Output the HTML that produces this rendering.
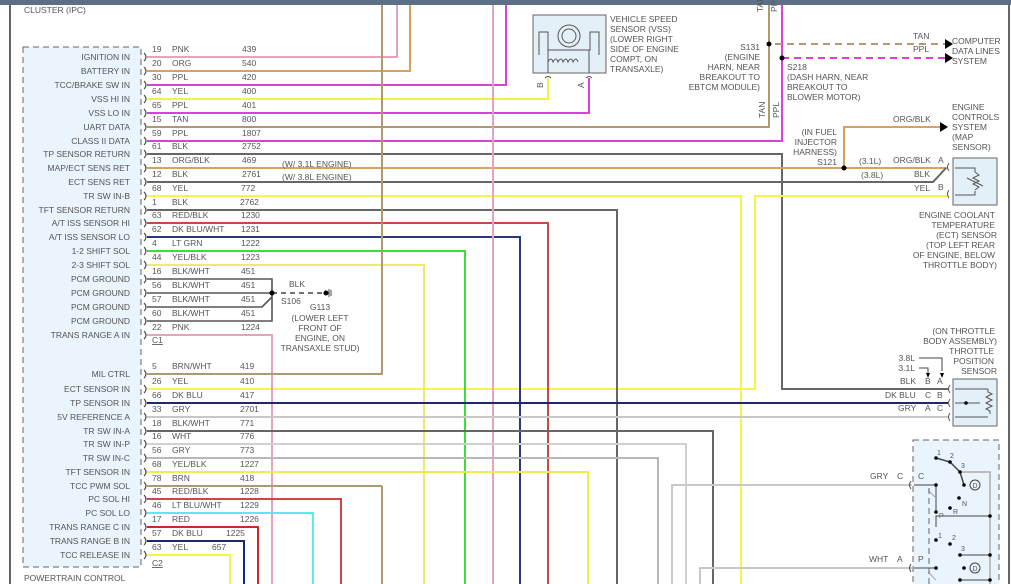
<!DOCTYPE html>
<html><head><meta charset="utf-8"><style>
html,body{margin:0;padding:0;background:#fff;}
svg{display:block;}
text{font-family:"Liberation Sans",sans-serif;font-size:8.5px;fill:#555;}
.r{text-anchor:end}
.m{text-anchor:middle}
</style></head><body>
<svg width="1011" height="584" viewBox="0 0 1011 584" xmlns="http://www.w3.org/2000/svg">
<rect x="0" y="0" width="1011" height="5" fill="#5b6f87"/>
<line x1="10" y1="5" x2="10" y2="584" stroke="#333" stroke-width="1.5"/>
<line x1="1009" y1="5" x2="1009" y2="584" stroke="#333" stroke-width="1.5"/>
<text x="24" y="13">CLUSTER (IPC)</text>
<text x="24" y="581">POWERTRAIN CONTROL</text>
<rect x="23" y="47" width="118" height="520" fill="#e9f4fc" stroke="#666" stroke-dasharray="6,4"/>

<g fill="none" stroke-width="2">
<path d="M147 57H397V5" stroke="#e6a3bb"/>
<path d="M147 71H410V5" stroke="#d9a060"/>
<path d="M147 85H506V5" stroke="#dd3fdd"/>
<path d="M147 99H548V78" stroke="#f2f24a"/>
<path d="M147 113H589V78" stroke="#dd3fdd"/>
<path d="M147 127H769V5" stroke="#b09870"/>
<path d="M147 141H782V5" stroke="#dd3fdd"/>
<path d="M147 154H782V389H948" stroke="#666"/>
<path d="M147 168H948" stroke="#d9a060"/>
<path d="M844 168V127H940" stroke="#d9a060"/>
<path d="M147 182H933L946 168" stroke="#666"/>
<path d="M147 196H741V584" stroke="#f5f54a"/>
<path d="M147 389H755V196H948" stroke="#f5f54a"/>
<path d="M147 210H617V584" stroke="#666"/>
<path d="M147 223H548V584" stroke="#c84848"/>
<path d="M147 237H520V584" stroke="#2a3a78"/>
<path d="M147 251H465V584" stroke="#3ddc3d"/>
<path d="M147 265H424V584" stroke="#f0ec6a"/>
<path d="M147 279H272V321H147M147 293H272M147 307H262L272 297" stroke="#555" stroke-width="1.6"/>
<path d="M147 335H272V584" stroke="#e6a3bb"/>
<path d="M493 5V584" stroke="#e6a3bb"/>
<path d="M147 374H382V5" stroke="#b09870"/>
<path d="M382 486V584" stroke="#b09870"/>
<path d="M147 403H948" stroke="#1a2a6a"/>
<path d="M147 417H948" stroke="#c8c8c8"/>
<path d="M147 431H713V584" stroke="#666"/>
<path d="M147 444H686V584" stroke="#d0d0d0"/>
<path d="M147 458H658V584" stroke="#b8b8b8"/>
<path d="M147 472H588V584" stroke="#f0ec4a"/>
<path d="M147 486H382" stroke="#b09870"/>
<path d="M147 499H341V584" stroke="#c84848"/>
<path d="M147 513H313V584" stroke="#5ee8ee"/>
<path d="M147 527H258V584" stroke="#cc2a2a"/>
<path d="M147 541H244V584" stroke="#1a2a6a"/>
<path d="M147 555H230V584" stroke="#f5f54a"/>
<path d="M672 584V485H912" stroke="#c8c8c8"/>
<path d="M700 584V568H912" stroke="#c8c8c8"/>
<path d="M775 44H945" stroke="#b09870" stroke-dasharray="7,5"/>
<path d="M782 58H945" stroke="#dd3fdd" stroke-dasharray="7,5"/>
</g>
<path d="M272 293H326" stroke="#444" stroke-width="1.5" stroke-dasharray="5,4"/>
<circle cx="272" cy="293" r="2.5" fill="#000"/><circle cx="326" cy="293" r="2.5" fill="#000"/>
<path d="M329 289V297M331 290V296" stroke="#444"/>
<text x="289" y="287">BLK</text><text x="281" y="304">S106</text>
<text x="320" y="310" class="m">G113</text>
<text x="320" y="321" class="m">(LOWER LEFT</text><text x="320" y="331" class="m">FRONT OF</text>
<text x="320" y="341" class="m">ENGINE, ON</text><text x="320" y="351" class="m">TRANSAXLE STUD)</text>
<text x="282" y="167">(W/ 3.1L ENGINE)</text><text x="282" y="180">(W/ 3.8L ENGINE)</text>

<g fill="none" stroke="#444" stroke-width="1.1">
<path d="M144 53q4 4 0 8M144 67q4 4 0 8M144 81q4 4 0 8M144 95q4 4 0 8M144 109q4 4 0 8M144 123q4 4 0 8M144 137q4 4 0 8M144 150q4 4 0 8M144 164q4 4 0 8M144 178q4 4 0 8M144 192q4 4 0 8M144 206q4 4 0 8M144 219q4 4 0 8M144 233q4 4 0 8M144 247q4 4 0 8M144 261q4 4 0 8M144 275q4 4 0 8M144 289q4 4 0 8M144 303q4 4 0 8M144 317q4 4 0 8M144 331q4 4 0 8M144 370q4 4 0 8M144 385q4 4 0 8M144 399q4 4 0 8M144 413q4 4 0 8M144 427q4 4 0 8M144 440q4 4 0 8M144 454q4 4 0 8M144 468q4 4 0 8M144 482q4 4 0 8M144 495q4 4 0 8M144 509q4 4 0 8M144 523q4 4 0 8M144 537q4 4 0 8M144 551q4 4 0 8"/>
</g>
<g>
<text class="r" x="130" y="60">IGNITION IN</text><text class="r" x="130" y="74">BATTERY IN</text><text class="r" x="130" y="88">TCC/BRAKE SW IN</text><text class="r" x="130" y="102">VSS HI IN</text><text class="r" x="130" y="116">VSS LO IN</text><text class="r" x="130" y="130">UART DATA</text><text class="r" x="130" y="144">CLASS II DATA</text><text class="r" x="130" y="157">TP SENSOR RETURN</text><text class="r" x="130" y="171">MAP/ECT SENS RET</text><text class="r" x="130" y="185">ECT SENS RET</text><text class="r" x="130" y="199">TR SW IN-B</text><text class="r" x="130" y="213">TFT SENSOR RETURN</text><text class="r" x="130" y="226">A/T ISS SENSOR HI</text><text class="r" x="130" y="240">A/T ISS SENSOR LO</text><text class="r" x="130" y="254">1-2 SHIFT SOL</text><text class="r" x="130" y="268">2-3 SHIFT SOL</text><text class="r" x="130" y="282">PCM GROUND</text><text class="r" x="130" y="296">PCM GROUND</text><text class="r" x="130" y="310">PCM GROUND</text><text class="r" x="130" y="324">PCM GROUND</text><text class="r" x="130" y="338">TRANS RANGE A IN</text>
<text class="r" x="130" y="377">MIL CTRL</text><text class="r" x="130" y="392">ECT SENSOR IN</text><text class="r" x="130" y="406">TP SENSOR IN</text><text class="r" x="130" y="420">5V REFERENCE A</text><text class="r" x="130" y="434">TR SW IN-A</text><text class="r" x="130" y="447">TR SW IN-P</text><text class="r" x="130" y="461">TR SW IN-C</text><text class="r" x="130" y="475">TFT SENSOR IN</text><text class="r" x="130" y="489">TCC PWM SOL</text><text class="r" x="130" y="502">PC SOL HI</text><text class="r" x="130" y="516">PC SOL LO</text><text class="r" x="130" y="530">TRANS RANGE C IN</text><text class="r" x="130" y="544">TRANS RANGE B IN</text><text class="r" x="130" y="558">TCC RELEASE IN</text>
</g>
<g>
<text x="152" y="52">19</text><text x="172" y="52">PNK</text><text x="242" y="52">439</text>
<text x="152" y="66">20</text><text x="172" y="66">ORG</text><text x="242" y="66">540</text>
<text x="152" y="80">30</text><text x="172" y="80">PPL</text><text x="242" y="80">420</text>
<text x="152" y="94">64</text><text x="172" y="94">YEL</text><text x="242" y="94">400</text>
<text x="152" y="108">65</text><text x="172" y="108">PPL</text><text x="242" y="108">401</text>
<text x="152" y="122">15</text><text x="172" y="122">TAN</text><text x="242" y="122">800</text>
<text x="152" y="136">59</text><text x="172" y="136">PPL</text><text x="242" y="136">1807</text>
<text x="152" y="149">61</text><text x="172" y="149">BLK</text><text x="242" y="149">2752</text>
<text x="152" y="163">13</text><text x="172" y="163">ORG/BLK</text><text x="242" y="163">469</text>
<text x="152" y="177">12</text><text x="172" y="177">BLK</text><text x="242" y="177">2761</text>
<text x="152" y="191">68</text><text x="172" y="191">YEL</text><text x="241" y="191">772</text>
<text x="152" y="205">1</text><text x="172" y="205">BLK</text><text x="240" y="205">2762</text>
<text x="152" y="218">63</text><text x="172" y="218">RED/BLK</text><text x="241" y="218">1230</text>
<text x="152" y="232">62</text><text x="172" y="232">DK BLU/WHT</text><text x="241" y="232">1231</text>
<text x="152" y="246">4</text><text x="172" y="246">LT GRN</text><text x="241" y="246">1222</text>
<text x="152" y="260">44</text><text x="172" y="260">YEL/BLK</text><text x="241" y="260">1223</text>
<text x="152" y="274">16</text><text x="172" y="274">BLK/WHT</text><text x="241" y="274">451</text>
<text x="152" y="288">56</text><text x="172" y="288">BLK/WHT</text><text x="241" y="288">451</text>
<text x="152" y="302">57</text><text x="172" y="302">BLK/WHT</text><text x="241" y="302">451</text>
<text x="152" y="316">60</text><text x="172" y="316">BLK/WHT</text><text x="241" y="316">451</text>
<text x="152" y="330">22</text><text x="172" y="330">PNK</text><text x="241" y="330">1224</text>
<text x="152" y="343" text-decoration="underline">C1</text>
<text x="152" y="369">5</text><text x="172" y="369">BRN/WHT</text><text x="240" y="369">419</text>
<text x="152" y="384">26</text><text x="172" y="384">YEL</text><text x="240" y="384">410</text>
<text x="152" y="398">66</text><text x="172" y="398">DK BLU</text><text x="240" y="398">417</text>
<text x="152" y="412">33</text><text x="172" y="412">GRY</text><text x="240" y="412">2701</text>
<text x="152" y="426">18</text><text x="172" y="426">BLK/WHT</text><text x="240" y="426">771</text>
<text x="152" y="439">16</text><text x="172" y="439">WHT</text><text x="240" y="439">776</text>
<text x="152" y="453">56</text><text x="172" y="453">GRY</text><text x="240" y="453">773</text>
<text x="152" y="467">68</text><text x="172" y="467">YEL/BLK</text><text x="240" y="467">1227</text>
<text x="152" y="481">78</text><text x="172" y="481">BRN</text><text x="240" y="481">418</text>
<text x="152" y="494">45</text><text x="172" y="494">RED/BLK</text><text x="240" y="494">1228</text>
<text x="152" y="508">46</text><text x="172" y="508">LT BLU/WHT</text><text x="240" y="508">1229</text>
<text x="152" y="522">17</text><text x="172" y="522">RED</text><text x="240" y="522">1226</text>
<text x="152" y="536">57</text><text x="172" y="536">DK BLU</text><text x="226" y="536">1225</text>
<text x="152" y="550">63</text><text x="172" y="550">YEL</text><text x="212" y="550">657</text>
<text x="152" y="566" text-decoration="underline">C2</text>
</g>

<rect x="533" y="15" width="73" height="58" fill="#e4f0f8" stroke="#666"/>
<g fill="none" stroke="#555" stroke-width="1">
<circle cx="569" cy="36" r="11"/><circle cx="569" cy="36" r="7"/>
<path d="M539 55V32H548V50H590V32H599V55"/>
<path d="M548 62q3-6 5 0q3-6 5 0q3-6 5 0q3-6 5 0q3-6 5 0q3-6 5 0"/>
<path d="M548 50V73M589 50V73"/>
<path d="M545 78q3-3 6 0M586 78q3-3 6 0"/>
</g>
<text x="610" y="22">VEHICLE SPEED</text><text x="610" y="32">SENSOR (VSS)</text><text x="610" y="42">(LOWER RIGHT</text><text x="610" y="52">SIDE OF ENGINE</text><text x="610" y="62">COMPT, ON</text><text x="610" y="72">TRANSAXLE)</text>
<text x="543" y="88" transform="rotate(-90 543 88)">B</text><text x="584" y="88" transform="rotate(-90 584 88)">A</text>

<circle cx="769" cy="44" r="2.5" fill="#000"/><circle cx="782" cy="58" r="2.5" fill="#000"/>
<path d="M945 39L953 44L945 49ZM945 53L953 58L945 63Z" fill="#000"/>
<text x="763" y="12" transform="rotate(-90 763 12)">TAN</text><text x="777" y="12" transform="rotate(-90 777 12)">PPL</text>
<text x="765" y="118" transform="rotate(-90 765 118)">TAN</text><text x="779" y="118" transform="rotate(-90 779 118)">PPL</text>
<text x="760" y="50" class="r">S131</text><text x="760" y="60" class="r">(ENGINE</text><text x="760" y="70" class="r">HARN, NEAR</text><text x="760" y="80" class="r">BREAKOUT TO</text><text x="760" y="90" class="r">EBTCM MODULE)</text>
<text x="787" y="70">S218</text><text x="787" y="80">(DASH HARN, NEAR</text><text x="787" y="90">BREAKOUT TO</text><text x="787" y="100">BLOWER MOTOR)</text>
<text x="913" y="39">TAN</text><text x="913" y="52">PPL</text>
<text x="952" y="44">COMPUTER</text><text x="952" y="54">DATA LINES</text><text x="952" y="64">SYSTEM</text>

<path d="M940 122L948 127L940 132Z" fill="#000"/>
<text x="893" y="122">ORG/BLK</text>
<text x="952" y="110">ENGINE</text><text x="952" y="120">CONTROLS</text><text x="952" y="130">SYSTEM</text><text x="952" y="140">(MAP</text><text x="952" y="150">SENSOR)</text>
<text x="837" y="135" class="r">(IN FUEL</text><text x="837" y="145" class="r">INJECTOR</text><text x="837" y="155" class="r">HARNESS)</text><text x="837" y="165" class="r">S121</text>
<circle cx="844" cy="168" r="2.5" fill="#000"/>
<text x="859" y="164">(3.1L)</text><text x="861" y="178">(3.8L)</text>
<text x="893" y="163">ORG/BLK</text><text x="914" y="177">BLK</text><text x="914" y="191">YEL</text>
<text x="938" y="163">A</text><text x="938" y="190">B</text>
<rect x="953" y="158" width="44" height="47" fill="#e4f0f8" stroke="#666"/>
<g fill="none" stroke="#555" stroke-width="1">
<path d="M949 163q-3 4 0 8M949 190q-3 4 0 8"/>
<path d="M955 168H975V172M955 195H975V191M975 172l4 3-6 3 6 3-6 3 6 3-4 3M967 178l16 8"/>
</g>
<text x="995" y="218" class="r">ENGINE COOLANT</text><text x="995" y="228" class="r">TEMPERATURE</text><text x="997" y="238" class="r">(ECT) SENSOR</text><text x="995" y="248" class="r">(TOP LEFT REAR</text><text x="995" y="258" class="r">OF ENGINE, BELOW</text><text x="997" y="268" class="r">THROTTLE BODY)</text>

<text x="995" y="334" class="r">(ON THROTTLE</text><text x="997" y="344" class="r">BODY ASSEMBLY)</text><text x="994" y="354" class="r">THROTTLE</text><text x="994" y="364" class="r">POSITION</text><text x="997" y="374" class="r">SENSOR</text>
<text x="915" y="361" class="r">3.8L</text><text x="915" y="371" class="r">3.1L</text>
<path d="M919 358H942V371M919 368H928V375" fill="none" stroke="#444"/>
<path d="M926 373L928 378L930 373ZM940 373L942 378L944 373Z" fill="#000"/>
<text x="900" y="384">BLK</text><text x="925" y="384">B</text><text x="937" y="384">A</text>
<text x="885" y="398">DK BLU</text><text x="925" y="398">C</text><text x="937" y="398">B</text>
<text x="898" y="411">GRY</text><text x="925" y="411">A</text><text x="937" y="411">C</text>
<rect x="953" y="379" width="44" height="47" fill="#e4f0f8" stroke="#666"/>
<g fill="none" stroke="#555" stroke-width="1">
<path d="M950 385q-3 4 0 8M950 399q-3 4 0 8M950 413q-3 4 0 8"/>
<path d="M955 389H988M955 403H980M955 417H988M988 389v3l4 2-6 3 6 3-6 3 6 3-6 3 4 2v3"/>
</g>
<circle cx="966" cy="403" r="1.8" fill="#000"/>

<rect x="913" y="440" width="86" height="150" fill="#e9f4fc" stroke="#666" stroke-dasharray="6,4"/>
<text x="870" y="479">GRY</text><text x="897" y="479">C</text><text x="918" y="479">C</text>
<text x="869" y="562">WHT</text><text x="897" y="562">A</text><text x="918" y="562">P</text>
<g fill="none" stroke="#444" stroke-width="1">
<path d="M911 481q-3 4 0 8M911 564q-3 4 0 8"/>
<path d="M914 485H936V511M914 568H936"/>
<path d="M936 458L950 462L960 472L964 485" stroke-width="1.5"/>
<path d="M960 472H990V584" stroke="#aaa" stroke-width="1.5"/>
<path d="M936 527V516H990M960 555H990M960 580H990"/>
<path d="M928 490l8 8M928 572l8 8" stroke="#aaa"/>
<path d="M929 488V584" stroke-dasharray="6,4" stroke="#666"/>
</g>
<g fill="#000">
<circle cx="936" cy="458" r="1.8"/><circle cx="950" cy="462" r="1.8"/><circle cx="960" cy="472" r="1.8"/><circle cx="964" cy="485" r="1.8"/><circle cx="936" cy="485" r="1.8"/><circle cx="959" cy="498" r="1.8"/><circle cx="950" cy="508" r="1.8"/><circle cx="936" cy="512" r="1.8"/><circle cx="990" cy="516" r="1.8"/><circle cx="936" cy="540" r="1.8"/><circle cx="950" cy="544" r="1.8"/><circle cx="960" cy="555" r="1.8"/><circle cx="990" cy="555" r="1.8"/><circle cx="936" cy="568" r="1.8"/><circle cx="964" cy="568" r="1.8"/><circle cx="960" cy="580" r="1.8"/><circle cx="990" cy="580" r="1.8"/>
</g>
<circle cx="975" cy="485" r="5" fill="none" stroke="#444"/><text x="975" y="488" class="m" style="font-size:7px">D</text>
<circle cx="975" cy="568" r="5" fill="none" stroke="#444"/><text x="975" y="571" class="m" style="font-size:7px">D</text>
<text x="937" y="455" style="font-size:7px">1</text><text x="950" y="458" style="font-size:7px">2</text><text x="961" y="468" style="font-size:7px">3</text>
<text x="962" y="506" style="font-size:7px">N</text><text x="953" y="514" style="font-size:7px">R</text><text x="939" y="518" style="font-size:7px">P</text>
<text x="938" y="538" style="font-size:7px">1</text><text x="952" y="540" style="font-size:7px">2</text><text x="961" y="551" style="font-size:7px">3</text>
</svg>
</body></html>
